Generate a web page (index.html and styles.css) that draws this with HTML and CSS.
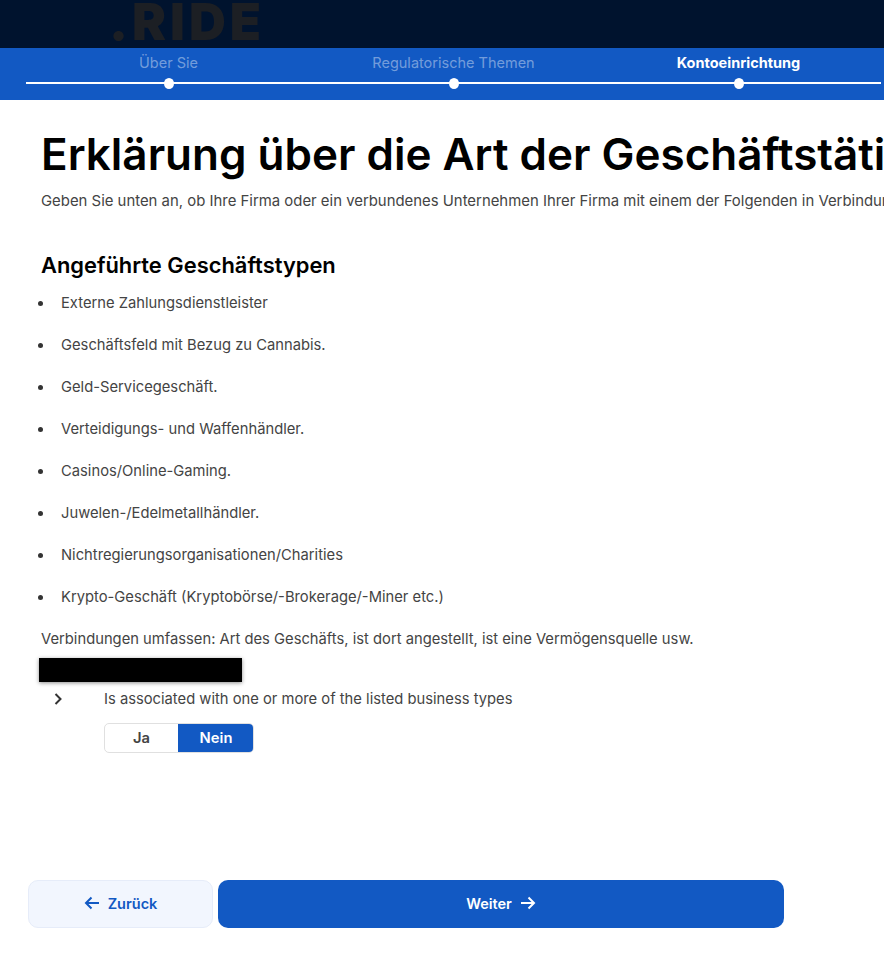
FILE: index.html
```html
<!DOCTYPE html>
<html lang="de">
<head>
<meta charset="utf-8">
<title>Erklärung über die Art der Geschäftstätigkeit</title>
<link rel="stylesheet" href="styles.css">
</head>
<body>
<header class="topbar"><span class="logo">.RIDE</span></header>
<nav class="stepper">
  <div class="step"><span class="step-label">Über Sie</span><span class="step-track"><span class="dot"></span></span></div>
  <div class="step"><span class="step-label">Regulatorische Themen</span><span class="step-track"><span class="dot"></span></span></div>
  <div class="step step-active"><span class="step-label">Kontoeinrichtung</span><span class="step-track"><span class="dot"></span></span></div>
</nav>
<main class="content">
  <h1 class="title">Erklärung über die Art der Geschäftstätigkeit</h1>
  <p class="lead">Geben Sie unten an, ob Ihre Firma oder ein verbundenes Unternehmen Ihrer Firma mit einem der Folgenden in Verbindung steht.</p>
  <h2 class="subtitle">Angeführte Geschäftstypen</h2>
  <ul class="types">
    <li>Externe Zahlungsdienstleister</li>
    <li>Geschäftsfeld mit Bezug zu Cannabis.</li>
    <li>Geld-Servicegeschäft.</li>
    <li>Verteidigungs- und Waffenhändler.</li>
    <li>Casinos/Online-Gaming.</li>
    <li>Juwelen-/Edelmetallhändler.</li>
    <li>Nichtregierungsorganisationen/Charities</li>
    <li>Krypto-Geschäft (Kryptobörse/-Brokerage/-Miner etc.)</li>
  </ul>
  <p class="note">Verbindungen umfassen: Art des Geschäfts, ist dort angestellt, ist eine Vermögensquelle usw.</p>
  <div class="redacted"></div>
  <div class="assoc">
    <svg class="chevron" width="10" height="14" viewBox="0 0 10 14"><path d="M2.500 2 7.500 7 2.500 12" fill="none" stroke="#333" stroke-width="2"/></svg>
    <div class="assoc-body">
      <div class="assoc-text">Is associated with one or more of the listed business types</div>
      <div class="toggle"><span class="opt opt-off">Ja</span><span class="opt opt-on">Nein</span></div>
    </div>
  </div>
</main>
<footer class="actions">
  <button class="btn btn-back"><svg width="16" height="14" viewBox="0 0 16 14"><path d="M15 7H2M7.500 1.500 2 7l5.500 5.500" fill="none" stroke="#1259c3" stroke-width="2"/></svg>Zurück</button>
  <button class="btn btn-next">Weiter<svg width="16" height="14" viewBox="0 0 16 14"><path d="M1 7h13M8.500 1.500 14 7l-5.500 5.500" fill="none" stroke="#fff" stroke-width="2"/></svg></button>
</footer>
</body>
</html>
```

FILE: styles.css
```css
* { box-sizing: border-box; }
html, body { margin: 0; padding: 0; }
body {
  width: 884px;
  height: 972px;
  overflow: hidden;
  background: #fff;
  color: #444;
  font-family: "Inter", "Liberation Sans", sans-serif;
  font-size: 14.750px;
}
.topbar {
  height: 48px;
  background: #00132e;
  padding-left: 109px;
  overflow: hidden;
}
.logo {
  display: block;
  font-family: "Inter", "Liberation Sans", sans-serif;
  font-weight: 900;
  font-size: 51px;
  line-height: 43px;
  letter-spacing: 4px;
  color: #1c1f24;
}
.stepper {
  height: 52px;
  background: #1259c3;
  padding-left: 26px;
  display: grid;
  grid-template-columns: repeat(3, 285px);
}
.step {
  display: flex;
  flex-direction: column;
  align-items: center;
  color: rgba(255, 255, 255, 0.42);
}
.step-label { height: 34px; line-height: 29px; font-size: 14.500px; }
.step-active { color: #fff; font-weight: 700; }
.step-track {
  width: 100%;
  height: 2px;
  background: #fff;
  display: flex;
  justify-content: center;
  align-items: center;
}
.dot { width: 10px; height: 11px; margin-left: 1px; border-radius: 50%; background: #fff; flex: none; }
.content { padding: 0 0 0 41px; }
.title {
  margin: 28px 0 0;
  font-size: 44px;
  line-height: 52px;
  font-weight: 600;
  color: #000;
  white-space: nowrap;
}
.lead { margin: 11px 0 0; font-size: 14.900px; line-height: 20px; white-space: nowrap; }
.subtitle {
  margin: 39px 0 0;
  font-size: 21.900px;
  line-height: 30px;
  font-weight: 600;
  color: #000;
}
.types { margin: 12px 0 0 -3px; padding: 0; list-style: none; }
.types li { display: flex; gap: 18px; height: 42px; line-height: 22px; }
.types li::before {
  content: "";
  flex: none;
  width: 5px;
  height: 5px;
  margin-top: 9px;
  border-radius: 50%;
  background: #333;
}
.note { margin: 0; line-height: 22px; }
.redacted {
  margin: 8px 0 0 -2px;
  width: 203px;
  height: 24px;
  background: #000;
  box-shadow: 0 1px 4px rgba(0, 0, 0, 0.45);
}
.assoc { display: flex; margin-top: 6px; }
.chevron { margin: 4px 0 0 12px; flex: none; }
.assoc-body { margin-left: 41px; }
.assoc-text { line-height: 22px; }
.toggle {
  display: flex;
  width: 150px;
  height: 30px;
  margin-top: 13px;
  border: 1px solid #e0e0e0;
  border-radius: 5px;
  overflow: hidden;
  font-weight: 600;
}
.opt { display: flex; align-items: center; justify-content: center; }
.opt-off { width: 73px; flex: none; }
.opt-on { flex: 1; margin: -1px -1px -1px 0; background: #1259c3; color: #fff; }
.actions {
  display: flex;
  gap: 5px;
  margin: 127px 0 0 28px;
}
.btn {
  height: 48px;
  padding: 0 0 2px;
  border-radius: 10px;
  display: flex;
  align-items: center;
  justify-content: center;
  gap: 8px;
  font: 600 14.500px "Inter", "Liberation Sans", sans-serif;
}
.btn-back { width: 185px; background: #f2f6fe; border: 1px solid #e6ecf9; color: #1259c3; }
.btn-next { width: 566px; background: #1259c3; border: 0; color: #fff; }
```
